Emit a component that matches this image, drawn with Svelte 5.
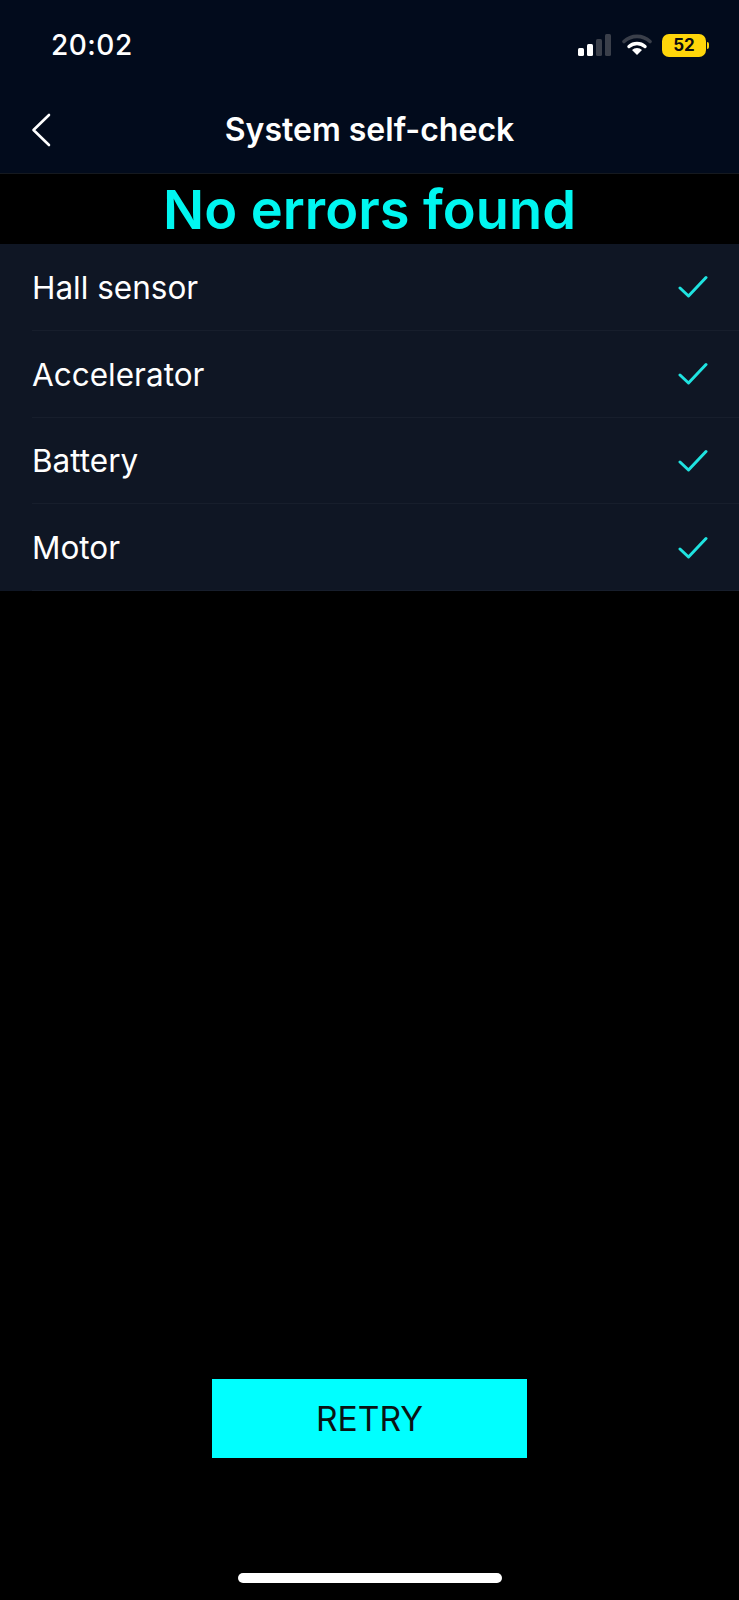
<script>
    const checks = ['Hall sensor', 'Accelerator', 'Battery', 'Motor']
</script>

<div class="page">
    <header class="top">
        <div class="status">
            <span class="time">20:02</span>
            <div class="status-icons">
                <svg class="signal" width="34" height="22" viewBox="0 0 34 22">
                    <rect x="0" y="14" width="6" height="8" rx="1.5" fill="#fff"/>
                    <rect x="9" y="10" width="6" height="12" rx="1.5" fill="#fff"/>
                    <rect x="18" y="5" width="6" height="17" rx="1.5" fill="#3a3f4a"/>
                    <rect x="27" y="0" width="6" height="22" rx="1.5" fill="#3a3f4a"/>
                </svg>
                <svg class="wifi" width="30" height="22" viewBox="0 0 30 22">
                    <path d="M2 7.5a19 19 0 0 1 26 0" fill="none" stroke="#3a3f4a" stroke-width="3.6" stroke-linecap="round"/>
                    <path d="M7 12.5a12 12 0 0 1 16 0" fill="none" stroke="#fff" stroke-width="3.4" stroke-linecap="round"/>
                    <path d="M15 21l-5-5a7 7 0 0 1 10 0z" fill="#fff"/>
                </svg>
                <div class="battery">
                    <span class="level">52</span>
                    <span class="nub"></span>
                </div>
            </div>
        </div>
        <nav class="title-bar">
            <svg class="back" width="20" height="34" viewBox="0 0 20 34">
                <path d="M18 2L2.5 17 18 32" fill="none" stroke="#fff" stroke-width="2.6" stroke-linecap="round" stroke-linejoin="round"/>
            </svg>
            <h1>System self-check</h1>
        </nav>
    </header>

    <div class="result">No errors found</div>

    <ul class="list">
        {#each checks as name}
            <li>
                <span>{name}</span>
                <svg width="30" height="23" viewBox="0 0 30 23">
                    <path d="M2 13L10.5 21 28 2.5" fill="none" stroke="#1fe3e0" stroke-width="3" stroke-linecap="round" stroke-linejoin="round"/>
                </svg>
            </li>
        {/each}
    </ul>

    <div class="footer">
        <button>RETRY</button>
        <div class="home-bar"></div>
    </div>
</div>

<style>
    :global(body) {
        margin: 0;
        background: #000;
    }

    .page {
        width: 739px;
        height: 1600px;
        display: flex;
        flex-direction: column;
        background: #000;
        color: #fff;
        font-family: Inter, "Liberation Sans", sans-serif;
    }

    .top {
        height: 174px;
        box-sizing: border-box;
        background: #020b1c;
        border-bottom: 1px solid #15191f;
    }

    .status {
        height: 90px;
        display: flex;
        align-items: center;
        justify-content: space-between;
        padding: 0 30px 0 51px;
    }

    .time {
        font-size: 28px;
        font-weight: 500;
        letter-spacing: 0.5px;
    }

    .status-icons {
        display: flex;
        align-items: center;
        gap: 10px;
    }

    .battery {
        display: flex;
        align-items: center;
        gap: 1px;
    }

    .level {
        width: 44px;
        height: 23px;
        line-height: 23px;
        text-align: center;
        border-radius: 7px;
        background: #ffd60a;
        color: #0c0d10;
        font-size: 17px;
        font-weight: 700;
    }

    .nub {
        width: 2px;
        height: 7px;
        border-radius: 0 2px 2px 0;
        background: #ffd60a;
    }

    .title-bar {
        height: 83px;
        position: relative;
        display: flex;
        align-items: center;
        justify-content: center;
    }

    .back {
        position: absolute;
        left: 31px;
        top: 23px;
    }

    h1 {
        margin: 0 0 4px;
        font-size: 32px;
        font-weight: 600;
    }

    .result {
        height: 70px;
        line-height: 70px;
        text-align: center;
        color: #00f6f0;
        font-size: 54.2px;
        font-weight: 600;
    }

    .list {
        margin: 0;
        padding: 0;
        list-style: none;
        background: #0f1624;
    }

    li {
        height: 86.75px;
        box-sizing: border-box;
        margin-left: 32px;
        padding-right: 31px;
        display: flex;
        align-items: center;
        justify-content: space-between;
        border-bottom: 1px solid #171e2c;
        font-size: 31.5px;
    }

    li span {
        padding-top: 1px;
    }

    .footer {
        flex: 1;
        display: flex;
        flex-direction: column;
        align-items: center;
    }

    button {
        width: 315px;
        height: 79px;
        margin-top: 788px;
        border: none;
        border-radius: 0;
        background: #00ffff;
        color: #0a1414;
        font-family: inherit;
        font-size: 33.6px;
    }

    .home-bar {
        width: 264px;
        height: 10px;
        margin-top: 115px;
        border-radius: 5px;
        background: #fff;
    }
</style>
